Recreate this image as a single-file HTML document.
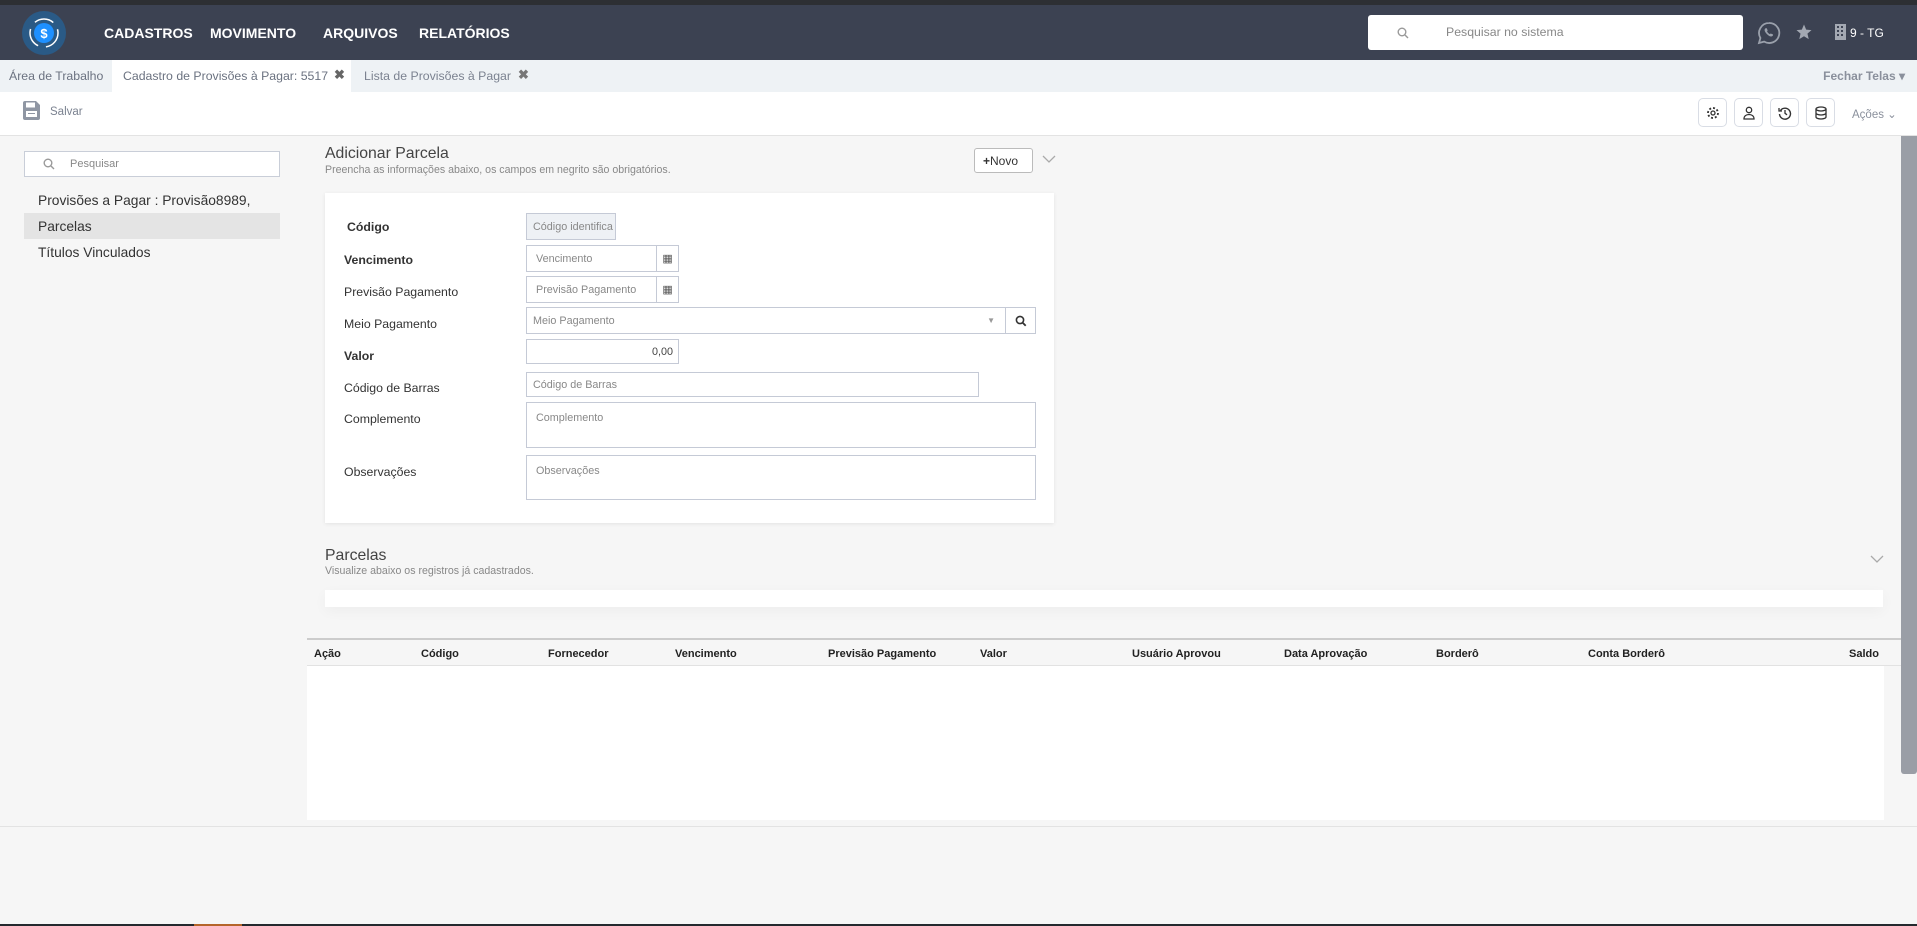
<!DOCTYPE html>
<html><head><meta charset="utf-8">
<style>
*{box-sizing:border-box;margin:0;padding:0}
body{width:1917px;height:926px;position:relative;overflow:hidden;background:#f6f6f6;font-family:"Liberation Sans",Arial,sans-serif;color:#333}
.a{position:absolute;white-space:nowrap}
.nav a{color:#fff;font-weight:bold;font-size:14px;position:absolute;top:20px;text-decoration:none}
.lbl{position:absolute;left:344px;font-size:12.3px;color:#333;white-space:nowrap}
.b{font-weight:bold}
.inp{position:absolute;left:526px;border:1px solid #c5cad6;background:#fff;font-size:10.8px;color:#888;padding-left:9px;display:flex;align-items:center;white-space:nowrap}
.cal{position:absolute;right:0;top:0;bottom:0;width:22px;border-left:1px solid #c5cad6;display:flex;align-items:center;justify-content:center;color:#555}
.th{position:absolute;top:648px;font-size:11px;font-weight:bold;color:#222;white-space:nowrap}
.ib{position:absolute;top:98px;width:29px;height:29px;border:1px solid #d9dde5;border-radius:5px;background:#fff;display:flex;align-items:center;justify-content:center}
</style></head><body>
<div class="a" style="left:0;top:0;width:1917px;height:5px;background:#2d2f33"></div>
<div class="a nav" style="left:0;top:5px;width:1917px;height:55px;background:#3c4252">
  <div class="a" style="left:22px;top:6px;width:44px;height:44px;border-radius:50%;background:#2a5a86"></div>
  <svg class="a" style="left:22px;top:6px" width="44" height="44" viewBox="0 0 44 44"><circle cx="22" cy="22" r="14" fill="none" stroke="#fff" stroke-width="1.5" stroke-dasharray="20 8"/><circle cx="22" cy="22" r="10" fill="#1e90ff"/><text x="22" y="27" font-size="13" font-weight="bold" fill="#fff" text-anchor="middle" font-family="Liberation Sans">$</text></svg>
  <a style="left:104px">CADASTROS</a>
  <a style="left:210px">MOVIMENTO</a>
  <a style="left:323px">ARQUIVOS</a>
  <a style="left:419px">RELATÓRIOS</a>
  <div class="a" style="left:1368px;top:10px;width:375px;height:35px;background:#fff;border-radius:3px">
    <svg class="a" style="left:29px;top:12px" width="12" height="12" viewBox="0 0 12 12"><circle cx="5" cy="5" r="3.8" fill="none" stroke="#999" stroke-width="1.4"/><path d="M8 8l3 3" stroke="#999" stroke-width="1.4"/></svg>
    <span class="a" style="left:78px;top:10px;font-size:12.3px;color:#888">Pesquisar no sistema</span>
  </div>
  <svg class="a" style="left:1757px;top:16px" width="24" height="24" viewBox="0 0 24 24"><path d="M12 2a10 10 0 0 0-8.6 15L2 22l5.2-1.4A10 10 0 1 0 12 2z" fill="none" stroke="#9aa0ab" stroke-width="1.8"/><path d="M8.5 7.5c.5-.6 1.2-.5 1.4.1l.7 1.6c.1.4-.3.8-.6 1.1.6 1.3 1.6 2.3 2.9 2.9.3-.3.7-.8 1.1-.6l1.6.7c.6.2.7.9.1 1.4-1 1-2.5 1-4-.1a10 10 0 0 1-3.3-3.3c-1-1.5-1.1-3-.1-4z" fill="#9aa0ab"/></svg>
  <svg class="a" style="left:1795px;top:18px" width="18" height="18" viewBox="0 0 24 24"><path d="M12 2l2.9 6.9 7.1.6-5.4 4.7 1.7 7.3L12 17.6 5.7 21.5l1.7-7.3L2 9.5l7.1-.6z" fill="#a3a8b2"/></svg>
  <svg class="a" style="left:1835px;top:19px" width="11" height="16" viewBox="0 0 11 16"><rect width="11" height="16" fill="#a3a8b2"/><g fill="#3c4252"><rect x="2" y="2" width="2" height="2"/><rect x="6" y="2" width="2" height="2"/><rect x="2" y="6" width="2" height="2"/><rect x="6" y="6" width="2" height="2"/><rect x="2" y="10" width="2" height="2"/><rect x="6" y="10" width="2" height="2"/></g></svg>
  <span class="a" style="left:1850px;top:21px;font-size:12px;color:#fff">9 - TG</span>
</div>
<div class="a" style="left:0;top:60px;width:1917px;height:32px;background:#eef2f5">
  <span class="a" style="left:9px;top:9px;font-size:12.3px;color:#6b7280">Área de Trabalho</span>
  <div class="a" style="left:112px;top:0;width:239px;height:32px;background:#fff"></div>
  <span class="a" style="left:123px;top:9px;font-size:12.3px;color:#6b7280">Cadastro de Provisões à Pagar: 5517</span>
  <span class="a" style="left:334px;top:7px;font-size:13px;color:#666;font-weight:bold">✖</span>
  <span class="a" style="left:364px;top:9px;font-size:12.3px;color:#7b8290">Lista de Provisões à Pagar</span>
  <span class="a" style="left:518px;top:7px;font-size:13px;color:#777;font-weight:bold">✖</span>
  <span class="a" style="right:12px;top:9px;font-size:12px;color:#8a909c;font-weight:bold">Fechar Telas ▾</span>
</div>
<div class="a" style="left:0;top:92px;width:1917px;height:44px;background:#fff;border-bottom:1px solid #e3e3e3">
  <svg class="a" style="left:23px;top:9px" width="17" height="19" viewBox="0 0 17 19"><path d="M0 2a2 2 0 0 1 2-2h11l4 4v13a2 2 0 0 1-2 2H2a2 2 0 0 1-2-2z" fill="#8f96a3"/><rect x="3" y="1.5" width="9" height="5" fill="#fff"/><rect x="3" y="10" width="11" height="6" fill="#fff"/><rect x="5" y="12" width="7" height="1" fill="#8f96a3"/></svg>
  <span class="a" style="left:50px;top:14px;font-size:11.5px;color:#7b8290">Salvar</span>
  <span class="a" style="left:1852px;top:15px;font-size:11.5px;color:#8a909c">Ações ⌄</span>
</div>
<div class="ib" style="left:1698px"><svg width="14" height="14" viewBox="0 0 14 14"><circle cx="7" cy="7" r="2" fill="none" stroke="#333" stroke-width="1.3"/><circle cx="7" cy="7" r="5" fill="none" stroke="#333" stroke-width="1.8" stroke-dasharray="2 1.9"/></svg></div>
<div class="ib" style="left:1734px"><svg width="14" height="14" viewBox="0 0 14 14"><circle cx="7" cy="4" r="2.7" fill="none" stroke="#333" stroke-width="1.3"/><path d="M2 13c0-3 2.3-4.5 5-4.5s5 1.5 5 4.5z" fill="none" stroke="#333" stroke-width="1.3"/></svg></div>
<div class="ib" style="left:1770px"><svg width="14" height="14" viewBox="0 0 14 14"><path d="M2.5 4.5A5.5 5.5 0 1 1 1.5 8" fill="none" stroke="#333" stroke-width="1.4"/><path d="M1 2v3h3" fill="none" stroke="#333" stroke-width="1.3"/><path d="M7 4v3.3l2 1.5" fill="none" stroke="#333" stroke-width="1.3"/></svg></div>
<div class="ib" style="left:1806px"><svg width="14" height="14" viewBox="0 0 14 14"><ellipse cx="7" cy="3" rx="5" ry="2" fill="none" stroke="#333" stroke-width="1.3"/><path d="M2 3v8c0 1.1 2.2 2 5 2s5-.9 5-2V3M2 7c0 1.1 2.2 2 5 2s5-.9 5-2" fill="none" stroke="#333" stroke-width="1.3"/></svg></div>

<div class="a" style="left:24px;top:151px;width:256px;height:26px;border:1px solid #c9ced8;background:#fff">
  <svg class="a" style="left:18px;top:6px" width="12" height="12" viewBox="0 0 12 12"><circle cx="5" cy="5" r="3.8" fill="none" stroke="#999" stroke-width="1.4"/><path d="M8 8l3 3" stroke="#999" stroke-width="1.4"/></svg>
  <span class="a" style="left:45px;top:6px;font-size:11px;color:#888">Pesquisar</span>
</div>
<span class="a" style="left:38px;top:193px;font-size:13.8px;color:#333">Provisões a Pagar : Provisão8989,</span>
<div class="a" style="left:24px;top:213px;width:256px;height:26px;background:#e4e4e4"></div>
<span class="a" style="left:38px;top:219px;font-size:13.8px;color:#333">Parcelas</span>
<span class="a" style="left:38px;top:245px;font-size:13.8px;color:#333">Títulos Vinculados</span>

<span class="a" style="left:325px;top:145px;font-size:15.8px;color:#444">Adicionar Parcela</span>
<span class="a" style="left:325px;top:164px;font-size:10.6px;color:#888">Preencha as informações abaixo, os campos em negrito são obrigatórios.</span>
<div class="a" style="left:974px;top:148px;width:59px;height:25px;border:1px solid #bbb;border-radius:3px;background:#fff;font-size:12px;color:#333;padding:5px 0 0 8px"><b>+</b>Novo</div>
<svg class="a" style="left:1042px;top:155px" width="14" height="9" viewBox="0 0 14 9"><path d="M1 1l6 6 6-6" fill="none" stroke="#aaa" stroke-width="1.3"/></svg>

<div class="a" style="left:325px;top:193px;width:729px;height:330px;background:#fff;box-shadow:0 1px 4px rgba(0,0,0,.08)"></div>
<span class="lbl b" style="left:347px;top:220px">Código</span>
<span class="lbl b" style="top:253px">Vencimento</span>
<span class="lbl" style="top:285px">Previsão Pagamento</span>
<span class="lbl" style="top:317px">Meio Pagamento</span>
<span class="lbl b" style="top:349px">Valor</span>
<span class="lbl" style="top:381px">Código de Barras</span>
<span class="lbl" style="top:412px">Complemento</span>
<span class="lbl" style="top:465px">Observações</span>

<div class="inp" style="top:213px;width:90px;height:27px;background:#eef1f5;padding-left:6px;overflow:hidden">Código identifica</div>
<div class="inp" style="top:245px;width:153px;height:27px">Vencimento<div class="cal">▦</div></div>
<div class="inp" style="top:276px;width:153px;height:27px">Previsão Pagamento<div class="cal">▦</div></div>
<div class="inp" style="top:307px;width:510px;height:27px;padding-left:6px">Meio Pagamento
  <span class="a" style="right:40px;top:8px;font-size:8px;color:#999">▼</span>
  <div class="cal" style="width:30px"><svg width="12" height="12" viewBox="0 0 12 12"><circle cx="5" cy="5" r="3.6" fill="none" stroke="#333" stroke-width="1.6"/><path d="M7.7 7.7l3 3" stroke="#333" stroke-width="1.8"/></svg></div></div>
<div class="inp" style="top:339px;width:153px;height:25px;justify-content:flex-end;padding-right:5px;color:#444">0,00</div>
<div class="inp" style="top:372px;width:453px;height:25px;padding-left:6px">Código de Barras</div>
<div class="inp" style="top:402px;width:510px;height:46px;align-items:flex-start;padding-top:9px">Complemento</div>
<div class="inp" style="top:455px;width:510px;height:45px;align-items:flex-start;padding-top:9px">Observações</div>

<span class="a" style="left:325px;top:547px;font-size:15.8px;color:#444">Parcelas</span>
<span class="a" style="left:325px;top:565px;font-size:10.6px;color:#888">Visualize abaixo os registros já cadastrados.</span>
<svg class="a" style="left:1870px;top:555px" width="14" height="9" viewBox="0 0 14 9"><path d="M1 1l6 6 6-6" fill="none" stroke="#aaa" stroke-width="1.3"/></svg>
<div class="a" style="left:325px;top:590px;width:1558px;height:17px;background:#fff;box-shadow:0 4px 14px rgba(0,0,0,.04)"></div>

<div class="a" style="left:307px;top:638px;width:1594px;height:2px;background:#ccc"></div>
<div class="a" style="left:307px;top:665px;width:1594px;height:1px;background:#e2e2e2"></div>
<div class="a" style="left:307px;top:666px;width:1577px;height:154px;background:#fff"></div>
<span class="th" style="left:314px">Ação</span>
<span class="th" style="left:421px">Código</span>
<span class="th" style="left:548px">Fornecedor</span>
<span class="th" style="left:675px">Vencimento</span>
<span class="th" style="left:828px">Previsão Pagamento</span>
<span class="th" style="left:980px">Valor</span>
<span class="th" style="left:1132px">Usuário Aprovou</span>
<span class="th" style="left:1284px">Data Aprovação</span>
<span class="th" style="left:1436px">Borderô</span>
<span class="th" style="left:1588px">Conta Borderô</span>
<span class="th" style="right:38px">Saldo</span>

<div class="a" style="left:1901px;top:136px;width:16px;height:638px;background:#9a9ea6;border-radius:0 0 3px 3px"></div>
<div class="a" style="left:0;top:826px;width:1917px;height:1px;background:#e3e3e3"></div>
<div class="a" style="left:0;top:924px;width:1917px;height:2px;background:#24292e"></div>
<div class="a" style="left:194px;top:924px;width:48px;height:2px;background:#b5652a"></div>
</body></html>
